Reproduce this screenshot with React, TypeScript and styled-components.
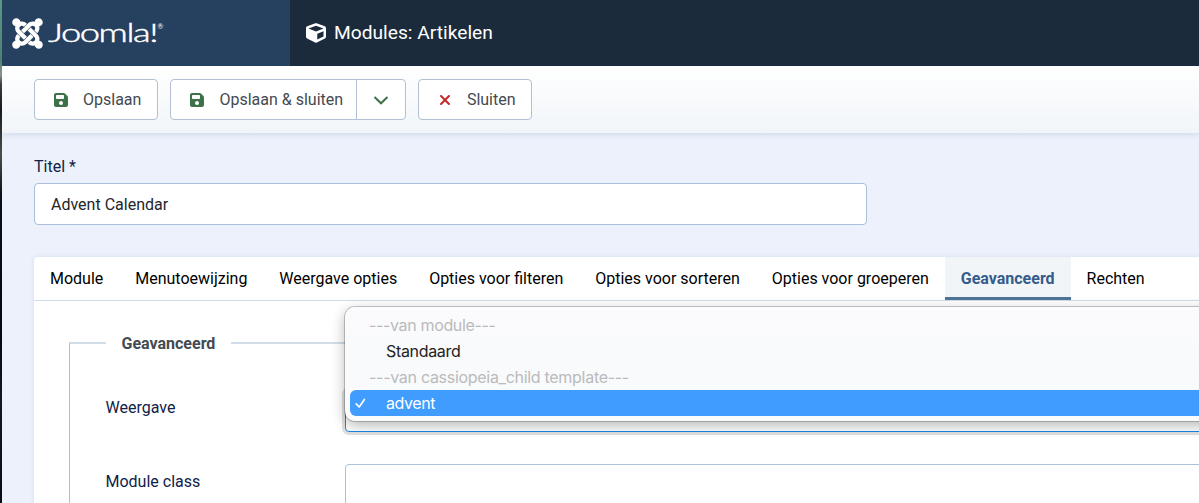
import React from "react";
import styled, { createGlobalStyle, css } from "styled-components";
import { FaFloppyDisk, FaXmark } from "react-icons/fa6";
import { FaCube, FaJoomla } from "react-icons/fa";

const GlobalStyle = createGlobalStyle`
  * { box-sizing: border-box; }
  html, body { margin: 0; padding: 0; overflow: hidden; }
  body {
    font-family: Roboto, "Liberation Sans", sans-serif;
    font-size: 16px;
    line-height: 24px;
    color: #22262a;
  }
`;

const Desktop = styled.div`
  height: 503px;
  padding-left: 2px;
  overflow: hidden;
  background: linear-gradient(#5b9a83 0, #4d8173 60px, #8b9490 75px, #3a403f 84px, #161b1c 110px, #4a4e4e 155px, #0b1014 195px, #05090f 330px, #14191d 400px, #0a0e12 503px);
`;

const Admin = styled.div`
  display: flex;
  flex-direction: column;
  height: 503px;
  overflow: hidden;
  background: #edf1fb;
`;

const Header = styled.header`
  display: flex;
  flex: none;
  height: 66px;
  background: #1c2b3c;
  color: #fff;
`;

const Brand = styled.div`
  display: flex;
  align-items: center;
  width: 288px;
  padding-left: 10px;
  background: #264160;
`;

const BrandMark = styled(FaJoomla)`
  flex: none;
  width: 31px;
  height: 35px;
`;

const Wordmark = styled.svg`
  margin-left: 5px;
  width: 118px;
  height: 40px;
  font-family: Lato, sans-serif;
  fill: #fff;
`;

const PageTitle = styled.h1`
  display: flex;
  align-items: center;
  gap: 8px;
  margin: 0;
  padding-left: 16px;
  font-size: 19.2px;
  font-weight: 400;

  svg { width: 20px; height: 20px; }
`;

const Toolbar = styled.div`
  position: relative;
  display: flex;
  flex: none;
  gap: 12px;
  height: 67px;
  padding: 13px 32px 0;
  background: linear-gradient(#fff, #f1f5f9);
  box-shadow: 0 1px 7px rgba(40, 80, 140, 0.17);
`;

const ButtonGroup = styled.div`
  display: flex;
`;

const Button = styled.button<{ $width: number; $joined?: "left" | "right"; $danger?: boolean }>`
  display: flex;
  align-items: center;
  width: ${(p) => p.$width}px;
  height: 41px;
  padding: 0 0 0 18px;
  border: 1px solid #b3c0d3;
  border-radius: 4px;
  background: #fff;
  color: #434a51;
  font: inherit;

  svg {
    flex: none;
    width: 16px;
    height: 16px;
    margin-right: 14px;
    color: ${(p) => (p.$danger ? "#c52827" : "#3d7249")};
  }
  ${(p) => p.$joined === "left" && css`border-radius: 4px 0 0 4px;`}
  ${(p) => p.$joined === "right" && css`
    margin-left: -1px;
    padding: 0;
    justify-content: center;
    border-radius: 0 4px 4px 0;
    svg { margin: 0; }
  `}
`;

const Main = styled.main`
  flex: none;
  padding: 21px 0 0 32px;
`;

const Label = styled.label`
  display: block;
  color: #0f2249;
`;

const TitleLabel = styled(Label)`
  padding-top: 1px;
`;

const TitleInput = styled.input`
  display: block;
  width: 833px;
  height: 42px;
  margin-top: 4px;
  padding: 0 16px;
  border: 1px solid #a9bfdb;
  border-radius: 4px;
  background: #fff;
  color: #22262a;
  font: inherit;
  outline: none;
`;

const Card = styled.section`
  width: 1200px;
  height: 300px;
  margin-top: 32px;
  border-radius: 4px 0 0 0;
  background: #fff;
  box-shadow: 0 0 5px rgba(30, 80, 160, 0.12);
`;

const Tabs = styled.div`
  display: flex;
  height: 44px;
  border-bottom: 1px solid #d0dbe8;
`;

const Tab = styled.button<{ $active?: boolean }>`
  height: 43px;
  padding: 0 15.98px;
  border: 0;
  background: transparent;
  color: #000;
  font: inherit;
  white-space: nowrap;
  ${(p) => p.$active && css`
    background: #f1f5f8;
    box-shadow: inset 0 -3px #4d7499;
    color: #355c8b;
    font-weight: 700;
  `}
`;

const Fieldset = styled.fieldset`
  min-width: 0;
  height: 240px;
  margin: 29px 0 0 35px;
  padding: 35px 0 0 35.5px;
  border: 1px solid #adbfd3;
  border-top: 2px solid #d2dde9;
  border-right: 0;
`;

const Legend = styled.legend`
  position: relative;
  top: 1px;
  padding: 1px 16px 0;
  margin-top: -1px;
  color: #434a51;
  font-weight: 700;
`;

const Row = styled.div`
  display: grid;
  grid-template-columns: 239.5px 1fr;
  height: 74px;

  > label { margin-top: 6px; }
`;

const Control = styled.div<{ $focused?: boolean }>`
  position: relative;
  height: 42px;
  border: 1px solid #adc0d8;
  border-radius: 4px;
  background: #fff;
  ${(p) => p.$focused && css`
    border-color: #1b86ea;
    box-shadow: 0 0 0 3px #e1e1e1;
  `}
`;

const Menu = styled.div`
  position: absolute;
  top: -84px;
  left: -1px;
  width: 900px;
  height: 114px;
  padding: 5px;
  border-radius: 10px;
  background: linear-gradient(#fbfbfd, #f9fafb 50%, #fafbfb);
  box-shadow: 0 0 0 1px rgba(0, 0, 0, 0.2), 0 4px 14px rgba(0, 0, 0, 0.3);
  font-family: Inter, sans-serif;
  font-size: 16px;
  z-index: 2;
`;

const Option = styled.div<{ $group?: boolean; $selected?: boolean }>`
  display: flex;
  align-items: center;
  height: 26px;
  padding-left: ${(p) => (p.$group ? 19 : 36)}px;
  color: ${(p) => (p.$group ? "#b9babb" : "#222")};
  white-space: nowrap;
  ${(p) => p.$selected && css`
    padding-left: 4px;
    border-radius: 6px;
    background: #409cff;
    color: #fff;
    svg { flex: none; width: 14px; height: 14px; margin-right: 18px; }
  `}
`;

const OptionText = styled.span<{ $spacing: number }>`
  letter-spacing: ${(p) => p.$spacing}px;
`;

const tabs = [
  "Module",
  "Menutoewijzing",
  "Weergave opties",
  "Opties voor filteren",
  "Opties voor sorteren",
  "Opties voor groeperen",
  "Geavanceerd",
  "Rechten",
];

export default function App() {
  return (
    <>
      <GlobalStyle />
      <Desktop>
        <Admin>
          <Header>
            <Brand>
              <BrandMark />
              <Wordmark viewBox="0 0 118 40">
                <text x="0" y="29" fontSize="25" fontWeight="300" stroke="#fff" strokeWidth="0.45" letterSpacing="-1" textLength="109" lengthAdjust="spacingAndGlyphs">Joomla!</text>
                <text x="109.5" y="16" fontSize="7">®</text>
              </Wordmark>
            </Brand>
            <PageTitle><FaCube />Modules: Artikelen</PageTitle>
          </Header>
          <Toolbar>
            <Button $width={124.4}><FaFloppyDisk />Opslaan</Button>
            <ButtonGroup>
              <Button $width={186.5} $joined="left"><FaFloppyDisk />Opslaan &amp; sluiten</Button>
              <Button $width={50} $joined="right" aria-label="Meer">
                <svg viewBox="0 0 16 16" fill="none" stroke="currentColor" strokeWidth="2"><path d="M1.5 5 8 11.3 14.5 5" /></svg>
              </Button>
            </ButtonGroup>
            <Button $width={114.4} $danger><FaXmark />Sluiten</Button>
          </Toolbar>
          <Main>
            <TitleLabel htmlFor="title">Titel *</TitleLabel>
            <TitleInput id="title" defaultValue="Advent Calendar" />
            <Card>
              <Tabs>
                {tabs.map((name) => <Tab key={name} $active={name === "Geavanceerd"}>{name}</Tab>)}
              </Tabs>
              <Fieldset>
                <Legend>Geavanceerd</Legend>
                <Row>
                  <Label>Weergave</Label>
                  <Control $focused>
                    <Menu>
                      <Option $group><OptionText $spacing={-0.35}>---van module---</OptionText></Option>
                      <Option><OptionText $spacing={-0.33}>Standaard</OptionText></Option>
                      <Option $group><OptionText $spacing={-0.29}>---van cassiopeia_child template---</OptionText></Option>
                      <Option $selected>
                        <svg viewBox="0 0 14 14" fill="none" stroke="currentColor" strokeWidth="1.7" strokeLinecap="round" strokeLinejoin="round"><path d="M2.2 7.8 5.2 11 10.4 3.4" /></svg>
                        <OptionText $spacing={-0.4}>advent</OptionText>
                      </Option>
                    </Menu>
                  </Control>
                </Row>
                <Row>
                  <Label>Module class</Label>
                  <Control />
                </Row>
              </Fieldset>
            </Card>
          </Main>
        </Admin>
      </Desktop>
    </>
  );
}
